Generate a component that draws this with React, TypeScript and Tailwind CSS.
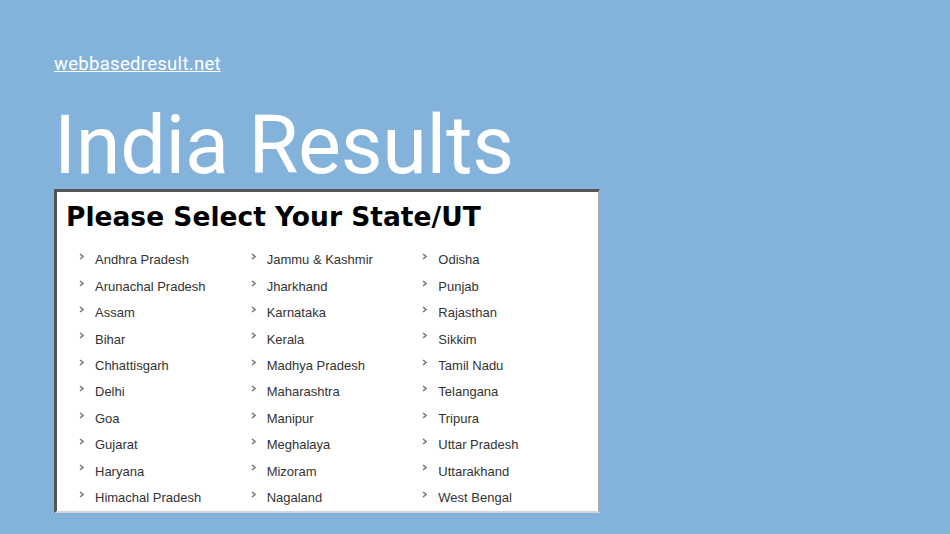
import React from 'react';

const columns: string[][] = [
  ['Andhra Pradesh', 'Arunachal Pradesh', 'Assam', 'Bihar', 'Chhattisgarh', 'Delhi', 'Goa', 'Gujarat', 'Haryana', 'Himachal Pradesh'],
  ['Jammu & Kashmir', 'Jharkhand', 'Karnataka', 'Kerala', 'Madhya Pradesh', 'Maharashtra', 'Manipur', 'Meghalaya', 'Mizoram', 'Nagaland'],
  ['Odisha', 'Punjab', 'Rajasthan', 'Sikkim', 'Tamil Nadu', 'Telangana', 'Tripura', 'Uttar Pradesh', 'Uttarakhand', 'West Bengal'],
];

function Arrow() {
  return (
    <svg width="5" height="7" viewBox="0 0 5 7" className="shrink-0 mt-[-7px]">
      <path d="M1 1 L4 3.5 L1 6" fill="none" stroke="#777" strokeWidth="1.5" />
    </svg>
  );
}

export default function App() {
  return (
    <div className="w-[950px] h-[534px] bg-[#83b2db] overflow-hidden relative">
      <div className="pl-[54px] pt-[52px]">
        <a
          href="#"
          className="text-white underline text-[18.5px] leading-[22px] tracking-[0.3px] font-['Roboto',sans-serif] font-normal"
        >
          webbasedresult.net
        </a>
        <h1 className="text-white font-['Roboto',sans-serif] font-normal text-[81px] leading-none mt-[29px] tracking-[-0.3px]">
          India Results
        </h1>

        {/* state picker panel */}
        <div className="mt-[3px] w-[546px] h-[324px] bg-white border-t-[3px] border-l-[3px] border-[#555] border-r-2 border-r-[#aaa] border-b-2 border-b-[#cfd8e0]">
          <h2 className="font-['DejaVu_Sans',sans-serif] font-bold text-[26.5px] text-black pl-[9px] pt-[10px] leading-[30px]">
            Please Select Your State/UT
          </h2>
          <div className="grid grid-cols-3 w-[537px] pl-[22px] mt-[15px] font-['Liberation_Sans',Arial,sans-serif] text-[13px] text-[#333]">
            {columns.map((col, ci) => (
              <ul key={ci} className="flex flex-col">
                {col.map((s) => (
                  <li key={s} className="flex items-center h-[26.4px] gap-[11px]">
                    <Arrow />
                    <span>{s}</span>
                  </li>
                ))}
              </ul>
            ))}
          </div>
        </div>
      </div>
    </div>
  );
}
